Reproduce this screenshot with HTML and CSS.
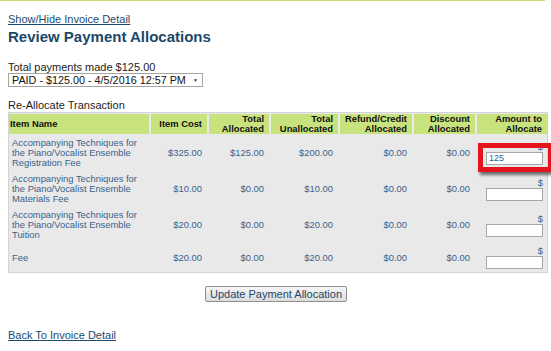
FILE: index.html
```html
<!DOCTYPE html>
<html lang="en">
<head>
    <meta charset="UTF-8">
    <meta name="viewport" content="width=device-width, initial-scale=1.0">
    <title>Review Payment Allocations</title>
    <link rel="stylesheet" href="styles.css">
</head>
<body>
    <div class="topline"></div>
    <div class="page">
        <a href="#" class="detail-link">Show/Hide Invoice Detail</a>
        <h1>Review Payment Allocations</h1>

        <div class="payments">
            <div class="payments-total">Total payments made $125.00</div>
            <div class="select-wrap">
                <select id="paymentSelect">
                    <option>PAID - $125.00 - 4/5/2016 12:57 PM</option>
                </select>
            </div>
        </div>

        <div class="section-label">Re-Allocate Transaction</div>
        <table class="alloc">
            <colgroup>
                <col class="c-name">
                <col class="c-cost">
                <col class="c-alloc">
                <col class="c-unalloc">
                <col class="c-refund">
                <col class="c-disc">
                <col class="c-amount">
            </colgroup>
            <thead>
                <tr>
                    <th class="name">Item Name</th>
                    <th>Item Cost</th>
                    <th>Total<br>Allocated</th>
                    <th>Total<br>Unallocated</th>
                    <th>Refund/Credit<br>Allocated</th>
                    <th>Discount<br>Allocated</th>
                    <th>Amount to<br>Allocate</th>
                </tr>
            </thead>
            <tbody>
                <tr>
                    <td class="name">Accompanying Techniques for<br>the Piano/Vocalist Ensemble<br>Registration Fee</td>
                    <td>$325.00</td>
                    <td>$125.00</td>
                    <td>$200.00</td>
                    <td>$0.00</td>
                    <td>$0.00</td>
                    <td class="amount">
                        <span class="dollar">$</span>
                        <span class="input-wrap">
                            <input type="text" value="125">
                            <span class="highlight"></span>
                        </span>
                    </td>
                </tr>
                <tr>
                    <td class="name">Accompanying Techniques for<br>the Piano/Vocalist Ensemble<br>Materials Fee</td>
                    <td>$10.00</td>
                    <td>$0.00</td>
                    <td>$10.00</td>
                    <td>$0.00</td>
                    <td>$0.00</td>
                    <td class="amount">
                        <span class="dollar">$</span>
                        <span class="input-wrap"><input type="text"></span>
                    </td>
                </tr>
                <tr>
                    <td class="name">Accompanying Techniques for<br>the Piano/Vocalist Ensemble<br>Tuition</td>
                    <td>$20.00</td>
                    <td>$0.00</td>
                    <td>$20.00</td>
                    <td>$0.00</td>
                    <td>$0.00</td>
                    <td class="amount">
                        <span class="dollar">$</span>
                        <span class="input-wrap"><input type="text"></span>
                    </td>
                </tr>
                <tr>
                    <td class="name">Fee</td>
                    <td>$20.00</td>
                    <td>$0.00</td>
                    <td>$20.00</td>
                    <td>$0.00</td>
                    <td>$0.00</td>
                    <td class="amount">
                        <span class="dollar">$</span>
                        <span class="input-wrap"><input type="text"></span>
                    </td>
                </tr>
            </tbody>
        </table>

        <div class="actions">
            <button id="updateBtn">Update Payment Allocation</button>
        </div>

        <a href="#" class="back-link">Back To Invoice Detail</a>
    </div>
</body>
</html>
```

FILE: styles.css
```css
body {
    margin: 0;
    background-color: #ffffff;
    font-family: "Liberation Sans", Arial, sans-serif;
    font-size: 11px;
    color: #1d1d1d;
}
.topline {
    width: 545px;
    height: 1px;
    background-color: #c6e27c;
}
.page {
    padding: 0 8px;
}
.detail-link,
.back-link {
    display: block;
    width: max-content;
    line-height: 13px;
    color: #1c4b71;
    text-decoration: underline;
}
.detail-link {
    margin-top: 12px;
}
h1 {
    margin: 2px 0 0;
    font-size: 15px;
    line-height: 18px;
    font-weight: bold;
    color: #1b4868;
}
.payments {
    margin-top: 15px;
}
.payments-total {
    line-height: 12px;
}
.select-wrap {
    position: relative;
    width: 195px;
}
.select-wrap select {
    display: block;
    width: 195px;
    height: 14px;
    margin: 0;
    padding: 0 0 0 3px;
    border: 1px solid #a3a3a3;
    border-radius: 0;
    background: #ffffff;
    font-family: "Liberation Sans", Arial, sans-serif;
    font-size: 10.8px;
    line-height: 12px;
    color: #111;
    appearance: none;
    -webkit-appearance: none;
}
.select-wrap:after {
    content: "\25BC";
    position: absolute;
    right: 5px;
    top: 4px;
    font-size: 5px;
    color: #333;
    pointer-events: none;
}
.section-label {
    margin-top: 12px;
    line-height: 13px;
}
.alloc {
    width: 540px;
    table-layout: fixed;
    border-collapse: separate;
    border-spacing: 0;
    border: 1px solid #d3d3d3;
    background-color: #e9e9e9;
    font-size: 9.4px;
    line-height: 10px;
}
.c-name { width: 140px; }
.c-cost { width: 58px; }
.c-alloc { width: 62px; }
.c-unalloc { width: 69px; }
.c-refund { width: 74px; }
.c-disc { width: 63px; }
.c-amount { width: 72px; }
.alloc th {
    padding: 0 5px 0 1px;
    border-top: 1px solid #e9e9e9;
    border-bottom: 1px solid #e9e9e9;
    border-left: 2px solid #e9e9e9;
    background-color: #c8e27d;
    color: #111;
    font-weight: bold;
    text-align: right;
    vertical-align: middle;
    white-space: nowrap;
}
.alloc th.name {
    border-left: 0;
    text-align: left;
}
.alloc td {
    padding: 3px 5px 3px 3px;
    color: #3a6289;
    text-align: right;
    vertical-align: middle;
}
.alloc td.name {
    text-align: left;
}
.alloc td.amount {
    padding-right: 4px;
}
.dollar {
    display: block;
    height: 10px;
    color: #3a6289;
}
.input-wrap {
    position: relative;
    display: block;
    width: 57px;
    margin-left: auto;
}
.input-wrap input {
    display: block;
    box-sizing: border-box;
    width: 57px;
    height: 13px;
    margin: 0;
    padding: 0 2px;
    border: 1px solid #a6a6a6;
    background: #ffffff;
    font-family: "Liberation Sans", Arial, sans-serif;
    font-size: 9px;
    color: #2f5f8a;
}
.highlight {
    position: absolute;
    left: -8px;
    top: -9px;
    right: -10px;
    bottom: -7px;
    border: 5px solid #e3141b;
    box-shadow: 2px 3px 3px rgba(0, 0, 0, 0.55);
    pointer-events: none;
}
.actions {
    width: 540px;
    margin-top: 13px;
    text-align: center;
}
#updateBtn {
    height: 16px;
    margin: 0 4px 0 0;
    padding: 0 4px;
    border: 1px solid #8e8e8e;
    border-radius: 2px;
    background: linear-gradient(#f6f6f6, #dddddd);
    font-family: "Liberation Sans", Arial, sans-serif;
    font-size: 11px;
    line-height: 13px;
    color: #1d476a;
    cursor: pointer;
}
.back-link {
    margin-top: 27px;
}
```
